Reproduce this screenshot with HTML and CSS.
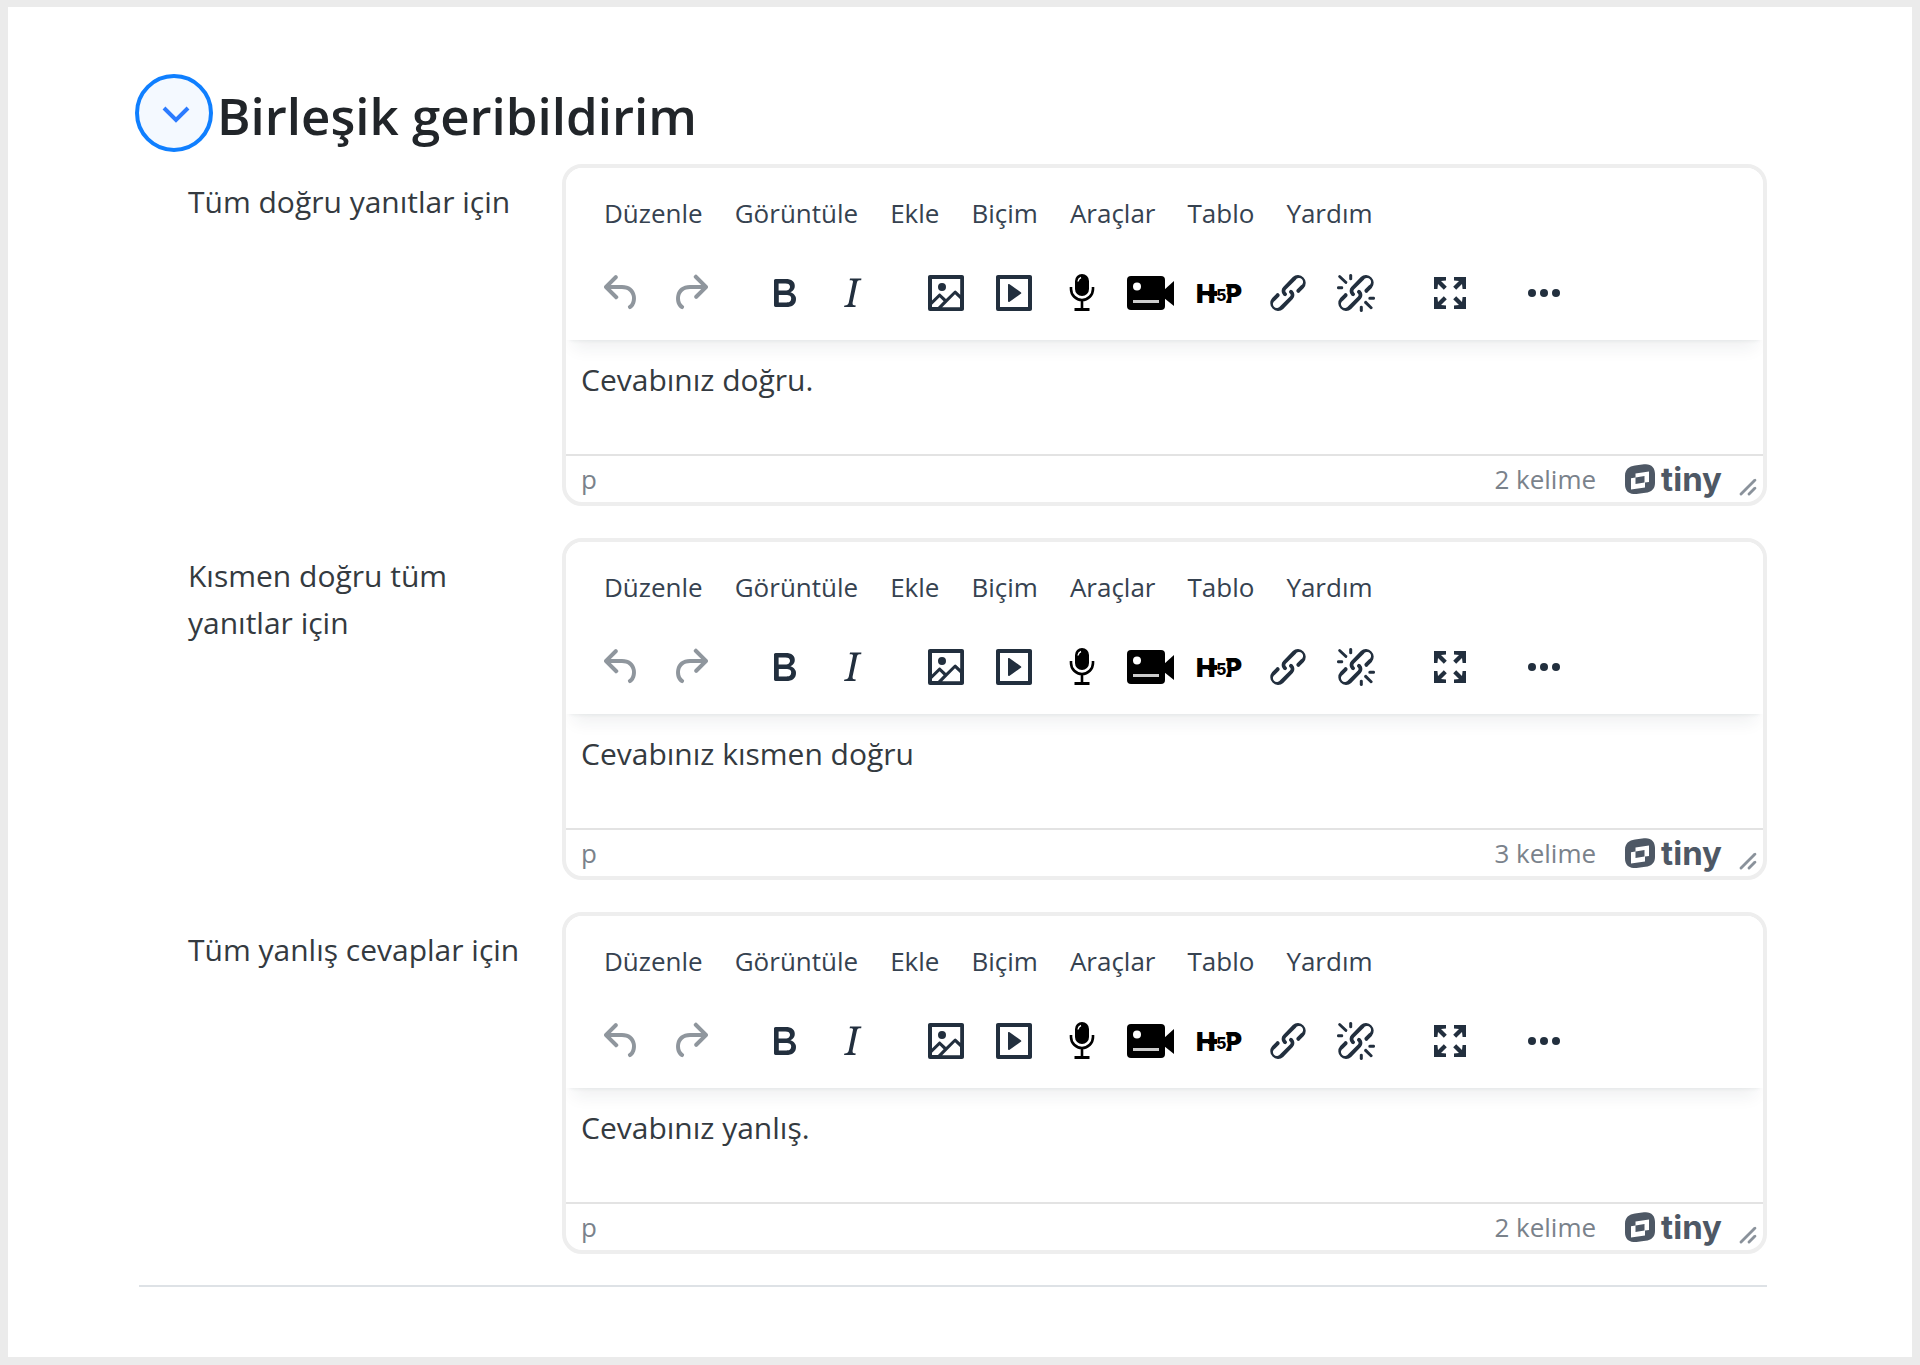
FILE: index.html
```
<!DOCTYPE html>
<html lang="tr">
<head>
    <meta charset="UTF-8">
    <meta name="viewport" content="width=device-width, initial-scale=1.0">
    <title>Birleşik geribildirim</title>
    <link rel="stylesheet" href="styles.css">
</head>
<body>
    <!-- shared icons -->
    <svg class="sprite" aria-hidden="true">
        <symbol id="undo" viewBox="0 0 24 24"><path d="M6.4 8H12c3.7 0 6.2 2 6.8 5.1.6 2.7-.4 5.6-2.3 6.8a1 1 0 0 1-1-1.8c1.1-.6 1.8-2.7 1.4-4.6-.5-2.1-2.1-3.5-4.9-3.5H6.4l3.3 3.3a1 1 0 1 1-1.4 1.4l-5-5a1 1 0 0 1 0-1.4l5-5a1 1 0 0 1 1.4 1.4L6.4 8Z"/></symbol>
        <symbol id="redo" viewBox="0 0 24 24"><path d="M17.6 10H12c-2.8 0-4.4 1.4-4.9 3.5-.4 2 .3 4 1.4 4.6a1 1 0 1 1-1 1.8c-2-1.2-2.9-4.1-2.3-6.8.6-3 3-5.1 6.8-5.1h5.6l-3.3-3.3a1 1 0 1 1 1.4-1.4l5 5a1 1 0 0 1 0 1.4l-5 5a1 1 0 0 1-1.4-1.4l3.3-3.3Z"/></symbol>
        <symbol id="bold" viewBox="0 0 24 24"><path fill-rule="evenodd" d="M7.8 19c-.3 0-.5 0-.6-.2l-.2-.5V5.7c0-.2 0-.4.2-.5l.6-.2h5c1.5 0 2.7.3 3.5 1 .7.6 1.1 1.4 1.1 2.5a3 3 0 0 1-.6 1.9c-.4.6-1 1-1.6 1.2.4.1.9.3 1.3.6s.8.7 1 1.2c.4.4.5 1 .5 1.6 0 1.3-.4 2.3-1.3 3-.8.7-2.1 1-3.8 1H7.8Zm5-8.3c.6 0 1.2-.1 1.6-.5.4-.3.6-.7.6-1.3 0-1.1-.8-1.7-2.3-1.7H9.3v3.5h3.4Zm.5 6c.7 0 1.3-.1 1.7-.4.4-.4.6-.9.6-1.5s-.2-1-.7-1.4c-.4-.3-1-.4-2-.4H9.4v3.8h4Z"/></symbol>
        <symbol id="italic" viewBox="0 0 24 24"><path d="m16.7 4.7-.1.9h-.3c-.6 0-1 0-1.4.3-.3.3-.4.6-.5 1.1l-2.1 9.8v.6c0 .5.4.8 1.4.8h.2l-.2.8H8l.2-.8h.2c1.1 0 1.8-.5 2-1.5l2-9.8.1-.5c0-.6-.4-.8-1.4-.8h-.3l.2-.9h5.8Z"/></symbol>
        <symbol id="image" viewBox="0 0 24 24"><path fill-rule="evenodd" d="m5 15.7 3.3-3.2c.3-.3.7-.3 1 0L12 15l4.1-4c.3-.4.8-.4 1 0l2 1.9V5H5v10.7ZM5 18V19h3l2.8-2.9-2-2L5 17.9Zm14-3-2.5-2.4-6.4 6.5H19v-4ZM4 3h16c.6 0 1 .4 1 1v16c0 .6-.4 1-1 1H4a1 1 0 0 1-1-1V4c0-.6.4-1 1-1Zm6 8a2 2 0 1 0 0-4 2 2 0 0 0 0 4Z"/></symbol>
        <symbol id="media" viewBox="0 0 24 24"><path fill-rule="evenodd" d="M4 3h16c.6 0 1 .4 1 1v16c0 .6-.4 1-1 1H4a1 1 0 0 1-1-1V4c0-.6.4-1 1-1Zm1 2v14h14V5H5Zm4.8 2.6 5.6 4a.5.5 0 0 1 0 .8l-5.6 4A.5.5 0 0 1 9 16V8a.5.5 0 0 1 .8-.4Z"/></symbol>
        <symbol id="mic" viewBox="0 0 48 48">
            <rect x="17" y="5" width="14" height="22" rx="7" fill="#000"/>
            <path d="M13 18v2a11 11 0 0 0 22 0v-2M24 31v9" fill="none" stroke="#000" stroke-width="2.6"/>
            <path d="M16.5 39h15v3h-15z" fill="#000"/>
            <path d="M20 12.5q.5-3 3-4" fill="none" stroke="#fff" stroke-width="1.4"/>
        </symbol>
        <symbol id="video" viewBox="0 0 48 48">
            <rect x="0" y="7" width="38" height="34" rx="4" fill="#000"/>
            <path d="M37 21 47 12v25l-10-8z" fill="#000"/>
            <circle cx="10" cy="17.5" r="4" fill="#fff"/>
            <path d="M6 31h26v3H6z" fill="#ccc"/>
        </symbol>
        <symbol id="h5p" viewBox="0 0 48 48">
            <text class="h5p-letter" x="0" y="34">H</text>
            <text class="h5p-letter" x="29" y="34">P</text>
            <text class="h5p-five" x="20" y="32">5</text>
            <path d="M12 22h9v5h-9z" fill="#000"/>
        </symbol>
        <symbol id="link" viewBox="0 0 24 24"><path d="M6.2 12.3a1 1 0 0 1 1.4 1.4l-2 2a2 2 0 1 0 2.6 2.8l4.8-4.8a1 1 0 0 0 0-1.4 1 1 0 1 1 1.4-1.3 2.9 2.9 0 0 1 0 4L9.6 20a3.9 3.9 0 0 1-5.5-5.5l2-2Zm11.6-.6a1 1 0 0 1-1.4-1.4l2-2a2 2 0 1 0-2.6-2.8L11 10.3a1 1 0 0 0 0 1.4A1 1 0 1 1 9.6 13a2.9 2.9 0 0 1 0-4L14.4 4a3.9 3.9 0 0 1 5.5 5.5l-2 2Z"/></symbol>
        <symbol id="unlink" viewBox="0 0 24 24"><path d="M6.2 12.3a1 1 0 0 1 1.4 1.4l-2 2a2 2 0 1 0 2.6 2.8l4.8-4.8a1 1 0 0 0 0-1.4 1 1 0 1 1 1.4-1.3 2.9 2.9 0 0 1 0 4L9.6 20a3.9 3.9 0 0 1-5.5-5.5l2-2Zm11.6-.6a1 1 0 0 1-1.4-1.4l2-2a2 2 0 1 0-2.6-2.8L11 10.3a1 1 0 0 0 0 1.4A1 1 0 1 1 9.6 13a2.9 2.9 0 0 1 0-4L14.4 4a3.9 3.9 0 0 1 5.5 5.5l-2 2ZM7.6 6.3a.8.8 0 0 1-1 1.1L3.3 4.2a.7.7 0 1 1 1-1l3.2 3.1ZM5.1 8.6a.8.8 0 0 1 0 1.5H3a.8.8 0 0 1 0-1.5H5Zm5-3.5a.8.8 0 0 1-1.5 0V3a.8.8 0 0 1 1.5 0V5Zm6 11.8a.8.8 0 0 1 1-1l3.2 3.2a.8.8 0 0 1-1 1L16 17Zm-2.2 2a.8.8 0 0 1 1.5 0V21a.8.8 0 0 1-1.5 0V19Zm5-3.5a.7.7 0 1 1 0-1.5H21a.8.8 0 0 1 0 1.5H19Z"/></symbol>
        <symbol id="fullscreen" viewBox="0 0 24 24">
            <path id="corner" d="M4 4h6v1.7L7.5 6l2.9 2.9-1.5 1.5L6 7.5 5.7 10H4z"/>
            <use href="#corner" transform="rotate(90 12 12)"/>
            <use href="#corner" transform="rotate(180 12 12)"/>
            <use href="#corner" transform="rotate(270 12 12)"/>
        </symbol>
        <symbol id="more" viewBox="0 0 24 24"><circle cx="6" cy="12" r="2"/><circle cx="12" cy="12" r="2"/><circle cx="18" cy="12" r="2"/></symbol>
        <symbol id="tiny" viewBox="0 0 30 30">
            <path d="M10 1.6 19 .3C26-.6 30 3.5 30 10v9c0 6-3.5 9-9.5 9.8l-9 1.2C4 30.6 0 27 0 20.5V12C0 5.5 4 2.4 10 1.6Z"/>
            <path fill="#fff" fill-rule="evenodd" d="M10.5 9.5 24 7.5V18l-4 .6v4.9L6 25.5V14.2l4.5-.7ZM10.5 13.5v6.5l9-1.4v-6.5Z"/>
        </symbol>
        <symbol id="grip" viewBox="0 0 10 10"><path d="M8.1 1.1A.5.5 0 1 1 9 2l-7 7A.5.5 0 1 1 1 8l7-7ZM8.1 5.1A.5.5 0 1 1 9 6l-3 3A.5.5 0 1 1 5 8l3-3Z"/></symbol>
    </svg>

    <main class="page">
        <header class="section-header">
            <button class="toggle" type="button" aria-expanded="true" aria-label="Daralt">
                <svg viewBox="0 0 28 18"><path d="M2 2l12 12L26 2"/></svg>
            </button>
            <h1>Birleşik geribildirim</h1>
        </header>

        <div class="rows">
            <div class="row">
                <label for="correct">Tüm doğru yanıtlar için</label>
                <div class="editor">
                    <div class="editor-header">
                        <div class="menubar">
                            <button type="button">Düzenle</button>
                            <button type="button">Görüntüle</button>
                            <button type="button">Ekle</button>
                            <button type="button">Biçim</button>
                            <button type="button">Araçlar</button>
                            <button type="button">Tablo</button>
                            <button type="button">Yardım</button>
                        </div>
                        <div class="toolbar">
                            <div class="group">
                                <button type="button" disabled aria-label="Geri al"><svg><use href="#undo"/></svg></button>
                                <button type="button" disabled aria-label="Yinele"><svg><use href="#redo"/></svg></button>
                            </div>
                            <div class="group">
                                <button type="button" aria-label="Kalın"><svg><use href="#bold"/></svg></button>
                                <button type="button" aria-label="İtalik"><svg><use href="#italic"/></svg></button>
                            </div>
                            <div class="group">
                                <button type="button" aria-label="Resim"><svg><use href="#image"/></svg></button>
                                <button type="button" aria-label="Çoklu ortam"><svg><use href="#media"/></svg></button>
                                <button type="button" aria-label="Ses kaydet"><svg><use href="#mic"/></svg></button>
                                <button class="wide" type="button" aria-label="Video kaydet"><svg><use href="#video"/></svg></button>
                                <button type="button" aria-label="H5P"><svg><use href="#h5p"/></svg></button>
                                <button type="button" aria-label="Bağlantı"><svg><use href="#link"/></svg></button>
                                <button type="button" aria-label="Bağlantıyı kaldır"><svg><use href="#unlink"/></svg></button>
                            </div>
                            <div class="group">
                                <button type="button" aria-label="Tam ekran"><svg><use href="#fullscreen"/></svg></button>
                            </div>
                            <div class="group">
                                <button type="button" aria-label="Daha fazla"><svg><use href="#more"/></svg></button>
                            </div>
                        </div>
                    </div>
                    <textarea id="correct">Cevabınız doğru.</textarea>
                    <div class="statusbar">
                        <span class="path">p</span>
                        <span>2 kelime</span>
                        <a class="brand" href="#"><svg><use href="#tiny"/></svg>tiny</a>
                        <svg class="grip"><use href="#grip"/></svg>
                    </div>
                </div>
            </div>

            <div class="row">
                <label for="partial">Kısmen doğru tüm yanıtlar için</label>
                <div class="editor">
                    <div class="editor-header">
                        <div class="menubar">
                            <button type="button">Düzenle</button>
                            <button type="button">Görüntüle</button>
                            <button type="button">Ekle</button>
                            <button type="button">Biçim</button>
                            <button type="button">Araçlar</button>
                            <button type="button">Tablo</button>
                            <button type="button">Yardım</button>
                        </div>
                        <div class="toolbar">
                            <div class="group">
                                <button type="button" disabled aria-label="Geri al"><svg><use href="#undo"/></svg></button>
                                <button type="button" disabled aria-label="Yinele"><svg><use href="#redo"/></svg></button>
                            </div>
                            <div class="group">
                                <button type="button" aria-label="Kalın"><svg><use href="#bold"/></svg></button>
                                <button type="button" aria-label="İtalik"><svg><use href="#italic"/></svg></button>
                            </div>
                            <div class="group">
                                <button type="button" aria-label="Resim"><svg><use href="#image"/></svg></button>
                                <button type="button" aria-label="Çoklu ortam"><svg><use href="#media"/></svg></button>
                                <button type="button" aria-label="Ses kaydet"><svg><use href="#mic"/></svg></button>
                                <button class="wide" type="button" aria-label="Video kaydet"><svg><use href="#video"/></svg></button>
                                <button type="button" aria-label="H5P"><svg><use href="#h5p"/></svg></button>
                                <button type="button" aria-label="Bağlantı"><svg><use href="#link"/></svg></button>
                                <button type="button" aria-label="Bağlantıyı kaldır"><svg><use href="#unlink"/></svg></button>
                            </div>
                            <div class="group">
                                <button type="button" aria-label="Tam ekran"><svg><use href="#fullscreen"/></svg></button>
                            </div>
                            <div class="group">
                                <button type="button" aria-label="Daha fazla"><svg><use href="#more"/></svg></button>
                            </div>
                        </div>
                    </div>
                    <textarea id="partial">Cevabınız kısmen doğru</textarea>
                    <div class="statusbar">
                        <span class="path">p</span>
                        <span>3 kelime</span>
                        <a class="brand" href="#"><svg><use href="#tiny"/></svg>tiny</a>
                        <svg class="grip"><use href="#grip"/></svg>
                    </div>
                </div>
            </div>

            <div class="row">
                <label for="incorrect">Tüm yanlış cevaplar için</label>
                <div class="editor">
                    <div class="editor-header">
                        <div class="menubar">
                            <button type="button">Düzenle</button>
                            <button type="button">Görüntüle</button>
                            <button type="button">Ekle</button>
                            <button type="button">Biçim</button>
                            <button type="button">Araçlar</button>
                            <button type="button">Tablo</button>
                            <button type="button">Yardım</button>
                        </div>
                        <div class="toolbar">
                            <div class="group">
                                <button type="button" disabled aria-label="Geri al"><svg><use href="#undo"/></svg></button>
                                <button type="button" disabled aria-label="Yinele"><svg><use href="#redo"/></svg></button>
                            </div>
                            <div class="group">
                                <button type="button" aria-label="Kalın"><svg><use href="#bold"/></svg></button>
                                <button type="button" aria-label="İtalik"><svg><use href="#italic"/></svg></button>
                            </div>
                            <div class="group">
                                <button type="button" aria-label="Resim"><svg><use href="#image"/></svg></button>
                                <button type="button" aria-label="Çoklu ortam"><svg><use href="#media"/></svg></button>
                                <button type="button" aria-label="Ses kaydet"><svg><use href="#mic"/></svg></button>
                                <button class="wide" type="button" aria-label="Video kaydet"><svg><use href="#video"/></svg></button>
                                <button type="button" aria-label="H5P"><svg><use href="#h5p"/></svg></button>
                                <button type="button" aria-label="Bağlantı"><svg><use href="#link"/></svg></button>
                                <button type="button" aria-label="Bağlantıyı kaldır"><svg><use href="#unlink"/></svg></button>
                            </div>
                            <div class="group">
                                <button type="button" aria-label="Tam ekran"><svg><use href="#fullscreen"/></svg></button>
                            </div>
                            <div class="group">
                                <button type="button" aria-label="Daha fazla"><svg><use href="#more"/></svg></button>
                            </div>
                        </div>
                    </div>
                    <textarea id="incorrect">Cevabınız yanlış.</textarea>
                    <div class="statusbar">
                        <span class="path">p</span>
                        <span>2 kelime</span>
                        <a class="brand" href="#"><svg><use href="#tiny"/></svg>tiny</a>
                        <svg class="grip"><use href="#grip"/></svg>
                    </div>
                </div>
            </div>
        </div>
        <hr>
    </main>
</body>
</html>
```
FILE: styles.css
```
* {
    box-sizing: border-box;
}
body {
    margin: 0;
    font-family: "Open Sans", "Noto Sans", sans-serif;
    font-size: 30px;
    line-height: 47px;
    color: #343a40;
    background: #fff;
}
button, textarea {
    font: inherit;
    color: inherit;
    background: none;
    border: none;
    margin: 0;
    padding: 0;
}
.sprite {
    display: none;
}
.page {
    min-height: 100vh;
    padding: 67px 145px 32px 131px;
    border: 8px solid #ebebeb;
    border-top-width: 7px;
}
.section-header {
    display: flex;
    align-items: center;
    gap: 4px;
    margin: 0 0 12px -4px;
}
.toggle {
    display: flex;
    align-items: center;
    justify-content: center;
    width: 78px;
    height: 78px;
    padding: 4px 0 0 4px;
    border: 4px solid #0f7fff;
    border-radius: 50%;
    background: #f4f9ff;
}
.toggle svg {
    width: 28px;
    height: 18px;
    fill: none;
    stroke: #2b7bff;
    stroke-width: 4;
}
h1 {
    margin: 0;
    padding-top: 4px;
    font-size: 51px;
    font-weight: 600;
    line-height: 72px;
    color: #212529;
}
.rows {
    display: flex;
    flex-direction: column;
    gap: 32px;
}
.row {
    display: grid;
    grid-template-columns: 423px 1fr;
}
.row label {
    padding: 14px 24px 0 49px;
}
.editor {
    border: 4px solid #eee;
    border-radius: 20px;
    overflow: hidden;
}
.editor-header {
    position: relative;
    padding: 8px 22px 4px;
    background: #fff;
    box-shadow: 0 4px 4px -4px rgba(34, 47, 62, 0.1), 0 16px 16px -8px rgba(34, 47, 62, 0.07);
}
.menubar {
    display: flex;
    height: 74px;
    font-size: 26px;
    color: #364250;
}
.menubar button {
    padding: 0 16px;
}
.toolbar {
    display: flex;
    gap: 26px;
    height: 86px;
}
.group {
    display: flex;
}
.group button {
    display: flex;
    align-items: center;
    justify-content: center;
    width: 68px;
}
.group .wide {
    width: 70px;
}
.group svg {
    width: 48px;
    height: 48px;
    fill: #222f3e;
}
.group button:disabled svg {
    opacity: 0.5;
}
.h5p-letter {
    font-family: Inter, sans-serif;
    font-size: 26px;
    font-weight: 900;
    fill: #000;
}
.h5p-five {
    font-family: Inter, sans-serif;
    font-size: 16px;
    font-weight: 800;
    fill: #000;
    stroke: #fff;
    stroke-width: 4;
    paint-order: stroke;
}
textarea {
    display: block;
    width: 100%;
    height: 114px;
    padding: 16px 15px;
    resize: none;
    overflow: hidden;
}
.statusbar {
    display: flex;
    align-items: center;
    height: 48px;
    padding: 0 5px 0 15px;
    border-top: 2px solid #e3e3e3;
    font-size: 26px;
    color: #7a828b;
}
.path {
    flex: 1;
}
.brand {
    display: flex;
    align-items: center;
    gap: 6px;
    margin: 0 16px 0 29px;
    font-family: Inter, sans-serif;
    font-size: 33px;
    font-weight: 700;
    color: #4e5865;
    text-decoration: none;
}
.brand svg {
    width: 30px;
    height: 30px;
    fill: #4e5865;
}
.grip {
    align-self: flex-end;
    width: 20px;
    height: 20px;
    margin-bottom: 5px;
    fill: #8a929b;
}
hr {
    height: 2px;
    margin: 31px 0 0;
    border: none;
    background: #dee2e6;
}
```
